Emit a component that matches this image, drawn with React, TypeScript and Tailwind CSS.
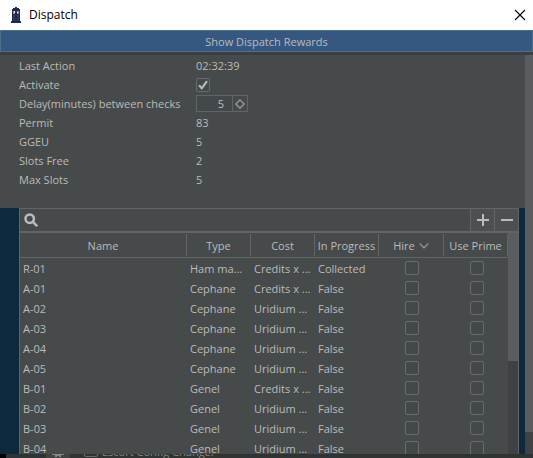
import type { ReactNode } from "react";

const columns = "grid grid-cols-[minmax(0,1fr)_64px_64px_64px_65px_64px]";

const rows = [
  ["R-01", "Ham ma...", "Credits x ...", "Collected"],
  ["A-01", "Cephane", "Credits x ...", "False"],
  ["A-02", "Cephane", "Uridium ...", "False"],
  ["A-03", "Cephane", "Uridium ...", "False"],
  ["A-04", "Cephane", "Uridium ...", "False"],
  ["A-05", "Cephane", "Uridium ...", "False"],
  ["B-01", "Genel", "Credits x ...", "False"],
  ["B-02", "Genel", "Uridium ...", "False"],
  ["B-03", "Genel", "Uridium ...", "False"],
  ["B-04", "Genel", "Uridium ...", "False"],
];

const stats = [
  ["Permit", "83"],
  ["GGEU", "5"],
  ["Slots Free", "2"],
  ["Max Slots", "5"],
];

function Check({ id, label, checked = false }: { id?: string; label?: string; checked?: boolean }) {
  return (
    <span className="grid size-3.5 shrink-0">
      <input
        id={id}
        aria-label={label}
        type="checkbox"
        defaultChecked={checked}
        className="peer col-start-1 row-start-1 size-3.5 appearance-none rounded-[2px] border border-[#6b6b6b] bg-[#43494a]"
      />
      <svg
        viewBox="0 0 14 14"
        className="pointer-events-none invisible col-start-1 row-start-1 size-3.5 peer-checked:visible"
        fill="none"
        stroke="#b4b6b6"
        strokeWidth="2.2"
      >
        <path d="M3 7.2 5.8 10.2 11 3.2" />
      </svg>
    </span>
  );
}

function Field({ label, htmlFor, children }: { label: string; htmlFor?: string; children: ReactNode }) {
  return (
    <div className="flex h-[19px] items-center">
      <label htmlFor={htmlFor} className="w-[177px] shrink-0 pt-0.5">{label}</label>
      {children}
    </div>
  );
}

function Value({ children }: { children: ReactNode }) {
  return <output className="pt-0.5">{children}</output>;
}

export default function App() {
  return (
    <div className="flex h-screen flex-col overflow-hidden bg-[#464a4a] font-['Open_Sans','Noto_Sans',sans-serif] text-[11px] text-[#bbbbbb]">
      <header className="flex h-[30px] shrink-0 items-center bg-white pr-[7px] pl-[11px] text-black">
        <svg viewBox="0 0 10 16" className="h-4 w-2.5" shapeRendering="crispEdges">
          <path d="M4 0h2v1H4zM2 1h6v1H2zM1 2h8v12H1zM0 14h10v2H0z" fill="#242a4c" />
          <path d="M2 4h2v3H2zM6 4h2v3H6z" fill="#7f8fb5" />
          <path d="M3 4h1v2H3zM6 5h1v1H6z" fill="#e8edf8" />
          <path d="M2 8h2v2H2zM6 8h2v2H6zM2 11h2v2H2zM6 11h2v2H6z" fill="#363d65" />
        </svg>
        <h1 className="ml-2 grow text-xs">Dispatch</h1>
        <button aria-label="Close" className="size-3">
          <svg viewBox="0 0 12 12" className="size-3" stroke="#000" strokeWidth="1.1">
            <path d="M1 1 11 11M11 1 1 11" />
          </svg>
        </button>
      </header>
      <button className="h-[22px] shrink-0 border border-[#4c708c] bg-[#365880] pt-0.5">Show Dispatch Rewards</button>
      <div className="h-[3px] shrink-0 bg-[#3c3f41]" />

      <div className="flex min-h-0 grow">
        <main className="flex min-w-0 grow flex-col">
          <section className="h-[153px] shrink-0 pt-px pl-[19px]">
            <Field label="Last Action"><Value>02:32:39</Value></Field>
            <Field label="Activate" htmlFor="activate">
              <Check id="activate" checked />
            </Field>
            <Field label="Delay(minutes) between checks" htmlFor="delay">
              <span className="flex h-[17px] w-[52px] border border-[#646464]">
                <input id="delay" defaultValue="5" className="w-[35px] bg-[#43494a] pt-px pr-2 text-right" />
                <button aria-label="Change delay" className="grid grow place-items-center border-l border-[#646464]">
                  <svg viewBox="0 0 10 10" className="size-2.5" fill="none" stroke="#a0a0a0" strokeWidth="1.2">
                    <path d="M5 .8 9.2 5 5 9.2.8 5Z" />
                  </svg>
                </button>
              </span>
            </Field>
            {stats.map(([label, value]) => (
              <Field key={label} label={label}><Value>{value}</Value></Field>
            ))}
          </section>

          <section className="min-h-0 grow overflow-hidden bg-[#0d293e] pr-1.5 pl-[19px]">
            <div className="flex h-full flex-col border-x border-t border-[#646464] bg-[#464a4a]">
              <div className="flex h-6 shrink-0 border-b-2 border-[#646464]">
                <label htmlFor="search" className="flex w-6 items-center pl-1">
                  <svg viewBox="0 0 14 14" className="size-3.5" fill="none" stroke="#bbbbbb" strokeWidth="2.5">
                    <circle cx="5.7" cy="5.7" r="4.2" />
                    <path d="m8.6 8.6 4.6 4.6" />
                  </svg>
                </label>
                <input id="search" aria-label="Search" className="min-w-0 grow" />
                <button aria-label="Add" className="grid w-6 place-items-center border-l border-[#646464] bg-[#4c5052]">
                  <svg viewBox="0 0 12 12" className="size-3" stroke="#bbbbbb" strokeWidth="2"><path d="M0 6h12M6 0v12" /></svg>
                </button>
                <button aria-label="Remove" className="grid w-6 place-items-center border-l border-[#646464] bg-[#4c5052]">
                  <svg viewBox="0 0 12 12" className="size-3" stroke="#bbbbbb" strokeWidth="2"><path d="M0 6h12" /></svg>
                </button>
              </div>

              <div className="flex min-h-0 grow">
                <table className="block min-w-0 grow overflow-hidden">
                  <thead className="block">
                    <tr className={`${columns} h-[25px] border-b border-[#646464] py-px`}>
                      {["Name", "Type", "Cost", "In Progress", "Hire", "Use Prime"].map((name) => (
                        <th key={name} className="flex items-center justify-center gap-1 border-r border-[#646464] pt-0.5 font-normal whitespace-nowrap">
                          {name}
                          {name === "Hire" && (
                            <svg viewBox="0 0 10 6" className="h-1.5 w-2.5" fill="none" stroke="#a0a0a0" strokeWidth="1.2">
                              <path d="m.7.7 4.3 4.3L9.3.7" />
                            </svg>
                          )}
                        </th>
                      ))}
                    </tr>
                  </thead>
                  <tbody className="block">
                    {rows.map((row) => (
                      <tr key={row[0]} className={`${columns} h-5`}>
                        {row.map((cell, i) => (
                          <td key={i} className="pt-px pl-[3px] leading-5 whitespace-nowrap">{cell}</td>
                        ))}
                        <td className="flex justify-center pt-[3px]"><Check label={`Hire ${row[0]}`} /></td>
                        <td className="flex justify-center pt-[3px] pl-px"><Check label={`Use Prime ${row[0]}`} /></td>
                      </tr>
                    ))}
                  </tbody>
                </table>
                <div className="w-2.5 shrink-0 bg-[#3f4244]">
                  <div className="h-[58%] bg-[#595d5f]" />
                </div>
              </div>
            </div>
          </section>
        </main>
        <div className="w-2 shrink-0 bg-[#3f4244]">
          <div className="h-[377px] max-h-[95%] bg-[#595d5f]" />
        </div>
      </div>

      <footer className="flex h-1 shrink-0 items-end overflow-hidden bg-[#2f3432] leading-3 text-[#858886]">
        <span className="h-1 w-1.5 bg-black" />
        <span className="ml-10 flex h-1 w-6 justify-center bg-[#3f4442]">
          <svg viewBox="0 0 12 4" className="h-1 w-3" fill="#858886"><path d="M0 0h12v1H9v2H7V2H5v1H3V1H0z" /></svg>
        </span>
        <label className="ml-3.5 flex items-end gap-1">
          <input type="checkbox" className="mb-px size-3.5 appearance-none rounded-[2px] border border-[#6b6b6b]" />
          Escort Config Changer
        </label>
      </footer>
    </div>
  );
}
